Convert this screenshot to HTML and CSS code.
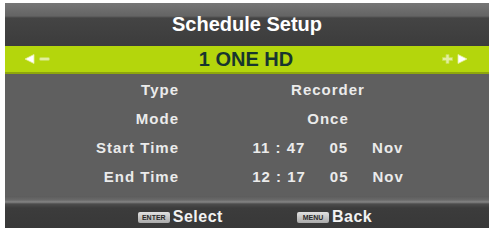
FILE: index.html
```html
<!DOCTYPE html>
<html lang="en">
<head>
  <meta charset="UTF-8">
  <title>Schedule Setup</title>
  <link rel="stylesheet" href="styles.css">
</head>
<body>
<div class="osd">
  <div class="title">Schedule Setup</div>

  <div class="channel">
    <span class="nav">
      <svg width="11" height="10" viewBox="0 0 11 10"><polygon points="1,5 10,0.5 10,9.5" class="tri"/></svg>
      <svg width="11" height="10" viewBox="0 0 11 10"><rect x="0.5" y="3.5" width="10" height="3" rx="1.2" class="sign"/></svg>
    </span>
    <span class="name">1 ONE HD</span>
    <span class="nav">
      <svg width="11" height="10" viewBox="0 0 11 10"><path d="M4 0.5h3v3h3.5v3H7v3H4v-3H0.5v-3H4z" class="sign"/></svg>
      <svg width="11" height="10" viewBox="0 0 11 10"><polygon points="10,5 1,0.5 1,9.5" class="tri"/></svg>
    </span>
  </div>

  <div class="rows">
    <div class="row">
      <span class="label">Type</span>
      <span class="value">Recorder</span>
    </div>
    <div class="row">
      <span class="label">Mode</span>
      <span class="value">Once</span>
    </div>
    <div class="row">
      <span class="label">Start Time</span>
      <span class="value time"><span>11 : 47</span><span>05</span><span>Nov</span></span>
    </div>
    <div class="row">
      <span class="label">End Time</span>
      <span class="value time"><span>12 : 17</span><span>05</span><span>Nov</span></span>
    </div>
  </div>

  <div class="footer">
    <span class="hint"><span class="key">ENTER</span>Select</span>
    <span class="hint"><span class="key">MENU</span>Back</span>
  </div>
</div>
</body>
</html>
```

FILE: styles.css
```css
body {
  margin: 0;
  background: #fff;
  font-family: "Liberation Sans", Arial, sans-serif;
  font-weight: bold;
}

.osd {
  margin: 3px 0 0 5px;
  width: 484px;
  height: 225px;
  display: flex;
  flex-direction: column;
  background: #5f5f5f;
}

/* title bar */
.title {
  height: 43px;
  line-height: 43px;
  text-align: center;
  font-size: 20px;
  color: #fff;
  background: linear-gradient(to bottom, #767676 0, #646464 13px, #444 15px, #3c3c3c 100%);
}

/* channel bar */
.channel {
  height: 26px;
  display: flex;
  align-items: center;
  justify-content: space-between;
  padding: 0 21px 0 19px;
  background: #b4d60c;
  border-bottom: 2px solid #8fa70c;
}

.channel .name {
  font-size: 20px;
  color: #18352f;
}

.nav {
  display: flex;
  gap: 4px;
  width: 26px;
}

.nav svg {
  display: block;
}

.tri {
  fill: #fff;
  stroke: #e4f09a;
  stroke-width: 0.8;
}

.sign {
  fill: #e2ee9e;
  stroke: #c6df52;
  stroke-width: 0.8;
}

/* settings */
.rows {
  flex: 1;
  padding-top: 1px;
}

.row {
  display: grid;
  grid-template-columns: 174px 152px;
  column-gap: 73px;
  height: 29px;
  line-height: 29px;
  font-size: 15px;
  letter-spacing: 1px;
  color: #ebebeb;
}

.label {
  text-align: right;
}

.value {
  text-align: center;
}

.value.time {
  display: flex;
  justify-content: center;
  gap: 24px;
}

/* footer */
.footer {
  height: 32px;
  box-sizing: border-box;
  padding: 10px 0 0 16px;
  display: flex;
  justify-content: center;
  gap: 74px;
  background: linear-gradient(to bottom, #5c5c5c 0, #6a6a6a 4px, #858585 6px, #4c4c4c 8px, #3c3c3c 12px, #383838 100%);
}

.hint {
  display: flex;
  align-items: center;
  height: 22px;
  font-size: 16px;
  letter-spacing: 0.5px;
  color: #f2f2f2;
}

.key {
  width: 32px;
  height: 11px;
  line-height: 11px;
  margin-right: 3px;
  text-align: center;
  font-size: 7px;
  letter-spacing: 0;
  color: #2a2a2a;
  background: linear-gradient(to bottom, #e2e2e2, #a9a9a9);
  border-radius: 2px;
}
```
